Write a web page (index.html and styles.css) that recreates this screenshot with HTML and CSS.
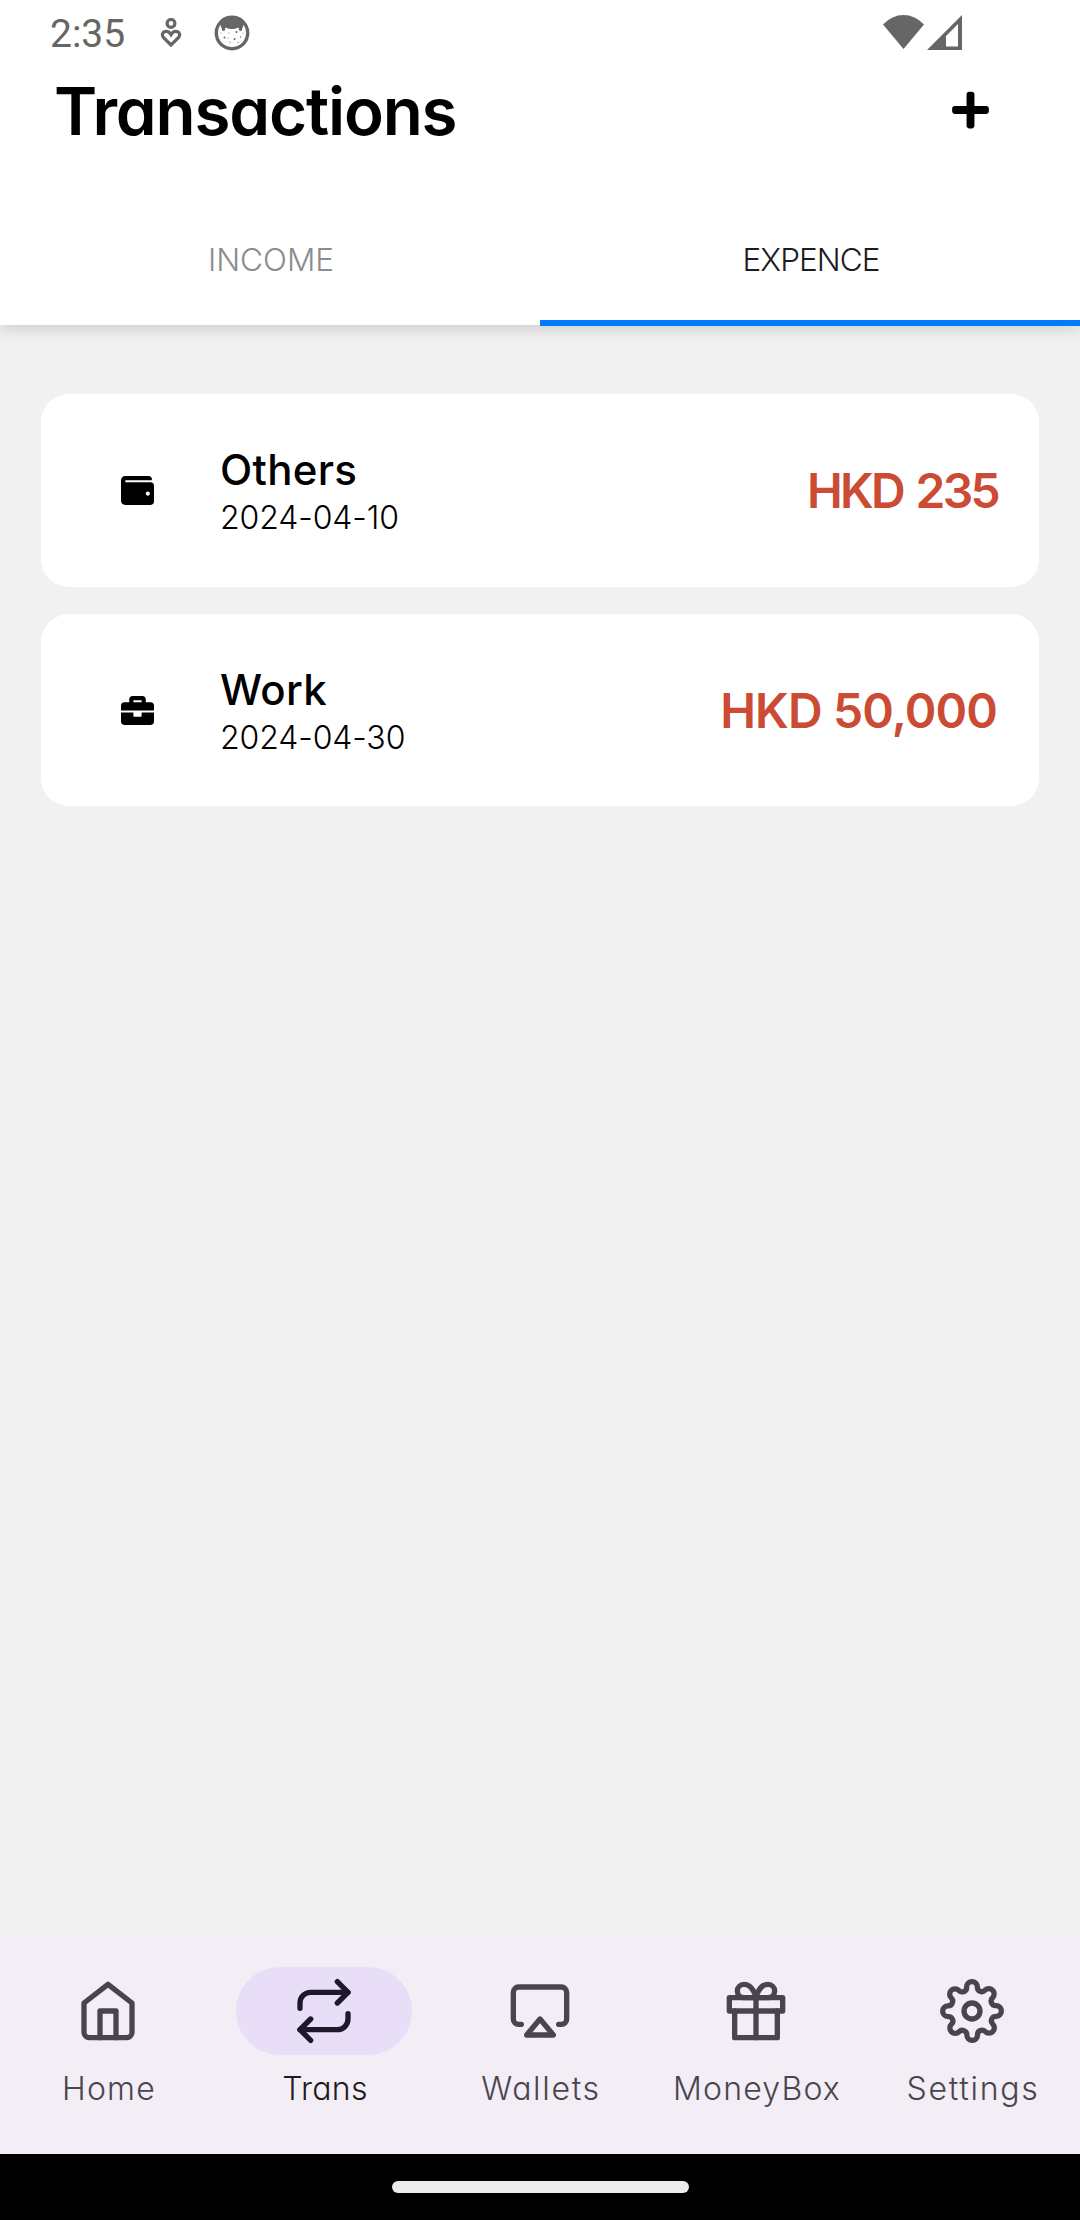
FILE: index.html
```html
<!DOCTYPE html>
<html lang="en">
<head>
<meta charset="utf-8">
<title>Transactions</title>
<link rel="stylesheet" href="styles.css">
</head>
<body>
<div class="screen">
  <header class="header">
    <div class="status">
      <span class="time">2:35</span>
      <svg class="status-care" viewBox="0 0 22 30"><g fill="none" stroke="currentColor" stroke-width="3.200"><circle cx="11" cy="5.400" r="3.900"/><path d="M11 27 3.600 19.600C1 16.600 3 13.400 6.200 13.400c2.400 0 3.800 1.500 4.800 3.200 1-1.700 2.400-3.200 4.800-3.200 3.200 0 5.200 3.200 2.600 6.200z"/></g></svg>
      <svg class="status-cat" viewBox="0 0 36 36"><circle cx="18" cy="18" r="15.700" fill="none" stroke="currentColor" stroke-width="3.400"/><path fill="currentColor" d="M6 8.500C10 0 26 0 30 8.500L27.500 16 25.500 16 24.500 12.500Q18 15.500 11.500 12.500L10.500 16 8.500 16z"/><g fill="currentColor"><circle cx="10.500" cy="22.500" r="1"/><circle cx="22.500" cy="17" r="1.100"/><circle cx="20.500" cy="24" r="1"/><circle cx="15" cy="18" r=".6"/><circle cx="16" cy="27" r=".6"/><circle cx="26.500" cy="22" r=".7"/><circle cx="24" cy="27.500" r=".6"/><circle cx="7" cy="18" r=".5"/><circle cx="14" cy="23" r=".5"/><circle cx="29" cy="18" r=".5"/></g></svg>
      <span class="signals">
        <svg class="wifi" viewBox="0 0 41 34"><path fill="currentColor" d="M20.500 34 0 9.500Q9 0 20.500 0T41 9.500z"/></svg>
        <svg class="cell" viewBox="0 0 35 35"><path fill="currentColor" fill-rule="evenodd" d="M35 0V35H0zM31 9 19 21V31.500H31z"/></svg>
      </span>
    </div>
    <div class="title-row">
      <h1 class="title">Transactions</h1>
      <svg class="plus" viewBox="0 0 448 512"><path d="M416 208H272V64c0-17.670-14.330-32-32-32h-32c-17.670 0-32 14.330-32 32v144H32c-17.670 0-32 14.330-32 32v32c0 17.670 14.330 32 32 32h144v144c0 17.670 14.330 32 32 32h32c17.670 0 32-14.330 32-32V304h144c17.670 0 32-14.330 32-32v-32c0-17.670-14.330-32-32-32z"/></svg>
    </div>
    <nav class="tabs">
      <a class="tab">INCOME</a>
      <a class="tab tab-active">EXPENCE</a>
    </nav>
  </header>
  <main class="list">
    <article class="card">
      <svg class="card-icon" viewBox="0 0 512 512"><path d="M461.200 128H80c-8.840 0-16-7.160-16-16s7.160-16 16-16h384c8.840 0 16-7.160 16-16 0-26.510-21.490-48-48-48H64C28.650 32 0 60.650 0 96v320c0 35.350 28.650 64 64 64h397.200c28.020 0 50.800-21.530 50.800-48V176c0-26.470-22.780-48-50.800-48zM416 336c-17.670 0-32-14.330-32-32s14.330-32 32-32 32 14.330 32 32-14.330 32-32 32z"/></svg>
      <div class="info"><h2 class="name">Others</h2><p class="date">2024-04-10</p></div>
      <strong class="amount amount-short">HKD 235</strong>
    </article>
    <article class="card">
      <svg class="card-icon" viewBox="0 0 512 512"><path d="M320 336c0 8.840-7.160 16-16 16h-96c-8.840 0-16-7.160-16-16v-48H0v144c0 25.600 22.400 48 48 48h416c25.600 0 48-22.400 48-48V288H320v48zm144-208h-80V80c0-25.600-22.400-48-48-48H176c-25.600 0-48 22.400-48 48v48H48c-25.600 0-48 22.400-48 48v80h512v-80c0-25.600-22.400-48-48-48zm-144 0H192V96h128v32z"/></svg>
      <div class="info"><h2 class="name">Work</h2><p class="date">2024-04-30</p></div>
      <strong class="amount">HKD 50,000</strong>
    </article>
  </main>
  <nav class="bottom">
    <a class="item"><span class="pill"><svg class="icon" viewBox="0 0 24 24"><path d="M3 9l9-7 9 7v11a2 2 0 0 1-2 2H5a2 2 0 0 1-2-2z"/><path d="M9 22V12h6v10"/></svg></span><span class="label">Home</span></a>
    <a class="item item-active"><span class="pill"><svg class="icon" viewBox="0 0 24 24"><path d="M17 1l4 4-4 4"/><path d="M3 11V9a4 4 0 0 1 4-4h14"/><path d="M7 23l-4-4 4-4"/><path d="M21 13v2a4 4 0 0 1-4 4H3"/></svg></span><span class="label label-tight">Trans</span></a>
    <a class="item"><span class="pill"><svg class="icon" viewBox="0 0 24 24"><path d="M5 17H4a2 2 0 0 1-2-2V5a2 2 0 0 1 2-2h16a2 2 0 0 1 2 2v10a2 2 0 0 1-2 2h-1"/><path d="M12 15l5 6H7z"/></svg></span><span class="label label-wide">Wallets</span></a>
    <a class="item"><span class="pill"><svg class="icon" viewBox="0 0 24 24"><path d="M20 12v10H4V12"/><path d="M2 7h20v5H2z"/><path d="M12 22V7"/><path d="M12 7H7.500a2.500 2.500 0 0 1 0-5C11 2 12 7 12 7z"/><path d="M12 7h4.500a2.500 2.500 0 0 0 0-5C13 2 12 7 12 7z"/></svg></span><span class="label">MoneyBox</span></a>
    <a class="item"><span class="pill"><svg class="icon" viewBox="0 0 24 24"><circle cx="12" cy="12" r="3"/><path d="M19.400 15a1.650 1.650 0 0 0 .33 1.820l.06.06a2 2 0 0 1 0 2.830 2 2 0 0 1-2.830 0l-.06-.06a1.650 1.650 0 0 0-1.820-.33 1.650 1.650 0 0 0-1 1.510V21a2 2 0 0 1-2 2 2 2 0 0 1-2-2v-.09A1.650 1.650 0 0 0 9 19.400a1.650 1.650 0 0 0-1.820.33l-.06.06a2 2 0 0 1-2.830 0 2 2 0 0 1 0-2.830l.06-.06a1.650 1.650 0 0 0 .33-1.820 1.650 1.650 0 0 0-1.510-1H3a2 2 0 0 1-2-2 2 2 0 0 1 2-2h.09A1.650 1.650 0 0 0 4.600 9a1.650 1.650 0 0 0-.33-1.820l-.06-.06a2 2 0 0 1 0-2.830 2 2 0 0 1 2.830 0l.06.06a1.650 1.650 0 0 0 1.820.33H9a1.650 1.650 0 0 0 1-1.510V3a2 2 0 0 1 2-2 2 2 0 0 1 2 2v.09a1.650 1.650 0 0 0 1 1.510 1.650 1.650 0 0 0 1.820-.33l.06-.06a2 2 0 0 1 2.830 0 2 2 0 0 1 0 2.830l-.06.06a1.650 1.650 0 0 0-.33 1.820V9a1.650 1.650 0 0 0 1.510 1H21a2 2 0 0 1 2 2 2 2 0 0 1-2 2h-.09a1.650 1.650 0 0 0-1.510 1z"/></svg></span><span class="label label-wide">Settings</span></a>
  </nav>
  <footer class="gesture"><span class="handle"></span></footer>
</div>
</body>
</html>
```
FILE: styles.css
```css
* { box-sizing: border-box; margin: 0; padding: 0; }
body { font-family: Inter, "Open Sans", sans-serif; font-feature-settings: "cv11"; color: #000; background: #f1f1f1; }
svg { display: block; flex: none; fill: currentColor; }
.screen { display: flex; flex-direction: column; width: 1080px; height: 2220px; overflow: hidden; }
.header { height: 325px; flex: none; background: #fff; box-shadow: 0 4px 14px rgba(0, 0, 0, .15); }
.status { display: flex; align-items: flex-start; height: 66px; padding: 15px 118px 0 50px; color: #666; }
.time { width: 110px; font: 400 39px/39px Roboto, sans-serif; }
.status-care { width: 22px; height: 30px; margin-top: 3px; }
.status-cat { width: 36px; height: 36px; margin-left: 32px; }
.signals { display: flex; gap: 3px; margin-left: auto; }
.wifi { width: 41px; height: 34px; }
.cell { width: 35px; height: 35px; }
.title-row { display: flex; justify-content: space-between; align-items: center; height: 88px; padding: 0 91px 0 54px; }
.title { padding-top: 3px; font-size: 65.500px; line-height: 80px; font-weight: 600; letter-spacing: -1.150px; }
.plus { width: 37px; height: 42px; }
.tabs { display: flex; height: 172px; }
.tab { display: flex; flex: 1; align-items: center; justify-content: center; height: 172px; padding: 71px 0 26px 2px; font-size: 31.500px; font-weight: 300; color: #8c8c8c; border-bottom: 6px solid transparent; }
.tab-active { letter-spacing: -.95px; color: #1c1b1f; border-color: #007aff; }
.list { display: flex; flex: 1; flex-direction: column; gap: 27px; padding: 69px 41px; }
.card { display: flex; align-items: center; height: 193px; padding: 0 42px 0 80px; border-radius: 28px; background: #fff; }
.card:last-child { height: 192px; padding-top: 1px; }
.card-icon { width: 33px; height: 33px; }
.info { margin-left: 66px; }
.name { font-size: 42px; line-height: 52px; font-weight: 500; letter-spacing: .3px; }
.date { padding-top: 1px; font-size: 32px; line-height: 41px; font-weight: 300; letter-spacing: -.1px; }
.amount { margin-left: auto; font-size: 48px; font-weight: 600; letter-spacing: -.9px; color: #cb4b34; }
.amount-short { letter-spacing: -2.700px; word-spacing: 3px; margin-right: -1px; }
.bottom { display: flex; height: 220px; flex: none; padding-top: 33px; background: #f3edf5; }
.item { display: flex; flex: 1; flex-direction: column; align-items: center; gap: 14px; color: #49454f; }
.pill { display: flex; align-items: center; justify-content: center; width: 176px; height: 88px; border-radius: 44px; }
.icon { width: 64px; height: 64px; overflow: visible; fill: none; stroke: currentColor; stroke-width: 2; stroke-linecap: round; stroke-linejoin: round; }
.label { margin-left: 2px; font-size: 32px; line-height: 40px; font-weight: 300; letter-spacing: 1.200px; }
.label-tight { letter-spacing: .3px; }
.label-wide { letter-spacing: 1.700px; }
.item-active { color: #1c1b1f; }
.item-active .pill { color: #1d192b; background: #e8def8; }
.gesture { display: flex; justify-content: center; height: 66px; flex: none; padding-top: 27px; background: #000; }
.handle { width: 297px; height: 12px; border-radius: 6px; background: #ececec; }
```
